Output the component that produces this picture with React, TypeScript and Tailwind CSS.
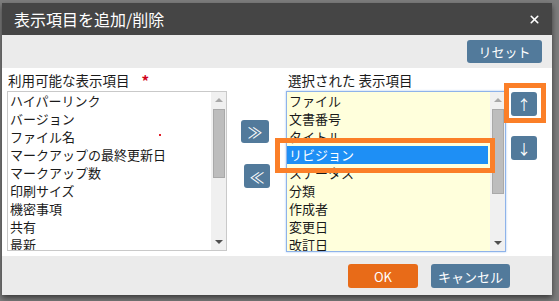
import { X } from 'lucide-react';

const available = [
  'ハイパーリンク',
  'バージョン',
  'ファイル名',
  'マークアップの最終更新日',
  'マークアップ数',
  '印刷サイズ',
  '機密事項',
  '共有',
  '最新',
];

const selected = [
  'ファイル',
  '文書番号',
  'タイトル',
  'リビジョン',
  'ステータス',
  '分類',
  '作成者',
  '変更日',
  '改訂日',
];

function Scrollbar({ thumbTop, thumbHeight }: { thumbTop: number; thumbHeight: number }) {
  return (
    <div className="relative w-[15px] h-full bg-[#f0f0f0] shrink-0">
      <div className="absolute left-1/2 top-[6px] -translate-x-1/2 w-0 h-0 border-x-[4px] border-x-transparent border-b-[4px] border-b-[#a8a8a8]" />
      <div
        className="absolute left-[2px] right-[1px] bg-[#bdbdbd] border border-[#a9a9a9]"
        style={{ top: thumbTop, height: thumbHeight }}
      />
      <div className="absolute left-1/2 bottom-[6px] -translate-x-1/2 w-0 h-0 border-x-[4px] border-x-transparent border-t-[4px] border-t-[#505050]" />
    </div>
  );
}

export default function App() {
  return (
    <div className="w-[559px] h-[301px] bg-[#7d7d7d] overflow-hidden pt-[3px] pl-[2px] font-['Noto_Sans_CJK_JP',sans-serif]">
      <div className="w-[550px] h-[292px] flex flex-col shadow-[0_3px_6px_rgba(0,0,0,0.55)]">
        {/* header */}
        <div className="h-[32px] bg-[#454545] flex items-center justify-between pl-[12px] pr-[11px]">
          <span className="text-white text-[16px] leading-none">表示項目を追加/削除</span>
          <X className="text-white" size={13} strokeWidth={3} />
        </div>

        {/* toolbar */}
        <div className="h-[33px] bg-[#ebebeb] flex items-center justify-end pr-[10px]">
          <button className="w-[75px] h-[23px] rounded-[3px] bg-[#527a9b] text-white text-[13px] leading-none">
            リセット
          </button>
        </div>

        {/* content */}
        <div className="relative flex-1 bg-white flex pl-[5px] pt-[2px] text-[#1a1a1a]">
          {/* available */}
          <div className="w-[220px] flex flex-col">
            <div className="h-[21px] flex items-center text-[13.5px] pl-[1px]">
              利用可能な表示項目
              <span className="ml-[12px] text-[#d0021b] text-[15px] font-bold leading-none">*</span>
            </div>
            <div className="relative h-[160px] border border-[#c9c9c9] flex overflow-hidden">
              <div className="flex-1 pl-[2px]">
                {available.map((item) => (
                  <div key={item} className="h-[18px] leading-[17px] text-[13px] whitespace-nowrap">
                    {item}
                  </div>
                ))}
              </div>
              <Scrollbar thumbTop={17} thumbHeight={69} />
              <span className="absolute left-[151px] top-[42px] w-[2px] h-[2px] bg-[#e0202a]" />
            </div>
          </div>

          {/* move buttons */}
          <div className="w-[59px] flex flex-col">
            <button className="mt-[50px] ml-[14px] w-[28px] h-[23px] rounded-[3px] bg-[#527a9b] text-white text-[15px] leading-none">
              ≫
            </button>
            <button className="mt-[21px] ml-[17px] w-[26px] h-[24px] rounded-[3px] bg-[#527a9b] text-white text-[15px] leading-none">
              ≪
            </button>
          </div>

          {/* selected */}
          <div className="w-[220px] flex flex-col">
            <div className="h-[21px] flex items-center text-[13.5px] pl-[2px]">選択された 表示項目</div>
            <div className="h-[161px] border border-[#8eb3ea] bg-[#ffffdc] flex overflow-hidden shadow-[0_0_2px_#a9c6f0]">
              <div className="flex-1 pr-[2px]">
                {selected.map((item, i) => (
                  <div
                    key={item}
                    className={
                      i === 3
                        ? 'h-[18px] leading-[17px] text-[13px] pl-[2px] bg-[#1e8ff5] text-white'
                        : 'h-[18px] leading-[17px] text-[13px] pl-[2px]'
                    }
                  >
                    {item}
                  </div>
                ))}
              </div>
              <Scrollbar thumbTop={17} thumbHeight={85} />
            </div>
          </div>

          {/* order buttons */}
          <div className="flex flex-col pl-[5px]">
            <button className="mt-[22px] w-[26px] h-[24px] rounded-[3px] bg-[#527a9b] text-white text-[14px] leading-none">
              ↑
            </button>
            <button className="mt-[20px] w-[26px] h-[24px] rounded-[3px] bg-[#527a9b] text-white text-[14px] leading-none">
              ↓
            </button>
          </div>

          {/* annotation boxes */}
          <div className="absolute left-[273px] top-[70px] w-[220px] h-[35px] border-[5px] border-[#fb7f28]" />
          <div className="absolute left-[502px] top-[15px] w-[42px] h-[40px] border-[5px] border-[#fb7f28]" />
        </div>

        {/* footer */}
        <div className="h-[39px] bg-[#ebebeb] flex items-start justify-end pt-[8px] pr-[42px] gap-[13px]">
          <button className="w-[70px] h-[24px] rounded-[3px] bg-[#e86b18] text-white text-[13px] leading-none">
            OK
          </button>
          <button className="w-[79px] h-[24px] rounded-[3px] bg-[#527a9b] text-white text-[13px] leading-none">
            キャンセル
          </button>
        </div>
      </div>
    </div>
  );
}
